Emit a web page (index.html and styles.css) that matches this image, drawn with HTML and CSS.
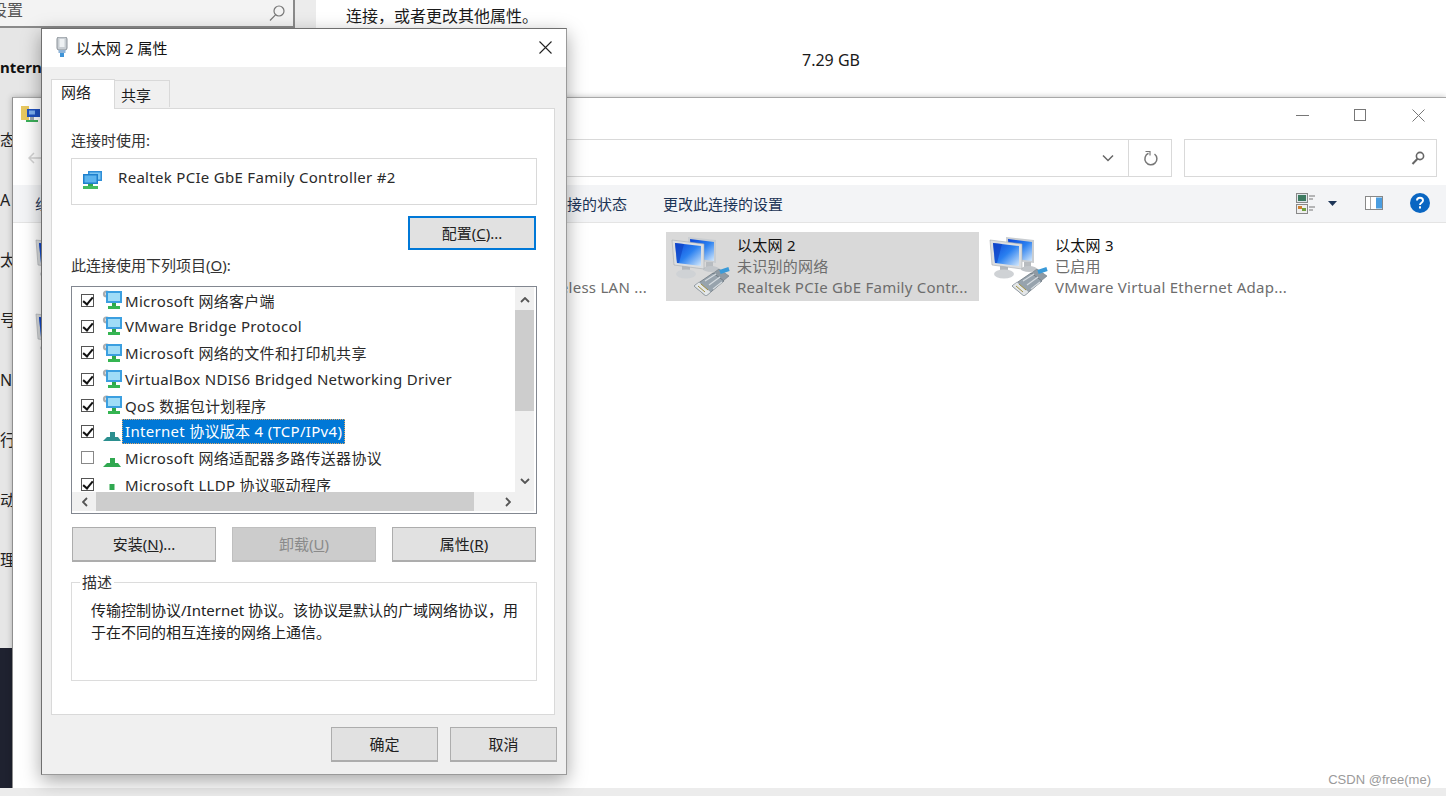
FILE: index.html
```html
<!DOCTYPE html>
<html lang="zh-CN">
<head>
<meta charset="utf-8">
<title>以太网 2 属性</title>
<link rel="stylesheet" href="styles.css">
</head>
<body>

<svg class="defs" width="0" height="0">
  <defs>
    <linearGradient id="blue" x1="0" y1="0" x2="1" y2="1">
      <stop offset="0" stop-color="#0a45d8"/>
      <stop offset=".5" stop-color="#2a80f0"/>
      <stop offset="1" stop-color="#d4e8fb"/>
    </linearGradient>
    <symbol id="bigpc" viewBox="0 0 60 60">
      <polygon points="18,1 46,4 46,27 19,24" fill="#c9cdd1"/>
      <polygon points="20,3 44,6 44,25 21,22" fill="url(#blue)"/>
      <rect x="36" y="26" width="7" height="6" fill="#b8bcc0"/>
      <ellipse cx="41" cy="33" rx="8" ry="3" fill="#c2c6ca"/>
      <rect x="12" y="29" width="8" height="7" fill="#b4b8bc"/>
      <ellipse cx="16" cy="38" rx="10" ry="4.500" fill="#cfd2d5"/>
      <polygon points="2,4 34,8 34,33 4,29" fill="#dcdee0" stroke="#a8acb0" stroke-width=".6"/>
      <polygon points="5,7 31,10 31,30 7,27" fill="url(#blue)"/>
      <polygon points="5,7 14,8 9,27 7,27" fill="#0f3fc0" opacity=".6"/>
      <polygon points="42,38 53,45 59,40 49,33" fill="#8f9aa3" stroke="#6f7a83" stroke-width=".6"/>
      <polygon points="24,50 43,37 54,45 36,60" fill="#97a3ad" stroke="#66717a" stroke-width=".7"/>
      <polygon points="24,50 36,60 41,56 29,46" fill="#e4e7e9" stroke="#7f8991" stroke-width=".5"/>
      <path d="M28 50l7 6M31 48l7 6" stroke="#a08f40" stroke-width="1" fill="none"/>
      <path d="M35 45l11-7M39 49l11-8M43 53l9-7" stroke="#d5dbe0" stroke-width="1.200" fill="none"/>
      <path d="M50 36l9-3" stroke="#3a9ad8" stroke-width="4" fill="none"/>
    </symbol>
    <symbol id="netpc" viewBox="0 0 20 20">
      <circle cx="4.500" cy="4" r="3.600" fill="#a9adb0"/>
      <circle cx="4.500" cy="4" r="1.400" fill="#e8e8e8"/>
      <rect x="4" y="1" width="16" height="12" fill="#3b9fe0"/>
      <rect x="6" y="3" width="12" height="8" fill="#9fdcf7"/>
      <rect x="10" y="13" width="4" height="3" fill="#2fa84a"/>
      <rect x="6" y="16" width="12" height="3" fill="#35b552"/>
    </symbol>
    <symbol id="stand" viewBox="0 0 20 20">
      <rect x="8" y="10" width="5" height="5" fill="currentColor"/>
      <polygon points="1,19 5,15 16,15 19,19" fill="currentColor"/>
    </symbol>
    <symbol id="standtop" viewBox="0 0 20 20">
      <rect x="7.500" y="10" width="5" height="6" fill="currentColor"/>
    </symbol>
    <symbol id="adapter" viewBox="0 0 20 18">
      <rect x="6" y="0" width="14" height="10" fill="#2f8fd8"/>
      <rect x="7.500" y="1.500" width="11" height="7" fill="#7cc6f2"/>
      <rect x="1" y="3" width="15" height="10" fill="#1f80cc"/>
      <rect x="2.500" y="4.500" width="12" height="7" fill="#5cb4ee"/>
      <rect x="6" y="13" width="5" height="2" fill="#30a850"/>
      <rect x="1" y="15" width="15" height="3" fill="#45bb60"/>
    </symbol>
  </defs>
</svg>

<!-- settings window behind everything -->
<div class="win settings">
  <div class="setnav">
    <div class="setsearch">
      <span class="setsearch-text">设置</span>
      <svg width="18" height="18" viewBox="0 0 18 18"><circle cx="11" cy="7" r="5" fill="none" stroke="#777" stroke-width="1.2"/><path d="M7.500 10.800L2 16.500" stroke="#777" stroke-width="1.2"/></svg>
    </div>
    <div class="setheading">ntern</div>
    <div class="setlist">
      <div>态</div>
      <div>A</div>
      <div>太</div>
      <div>号</div>
      <div>N</div>
      <div>行</div>
      <div>动</div>
      <div>理</div>
    </div>
    <div class="setfoot"></div>
  </div>
  <div class="setmain">
    <p>连接，或者更改其他属性。</p>
    <p class="setsize">7.29 GB</p>
  </div>
</div>

<!-- network connections -->
<div class="win explorer">
  <div class="extitle">
    <svg class="folderico" width="20" height="20" viewBox="0 0 20 20">
      <rect x="0" y="1" width="8" height="14" fill="#e8c860"/>
      <rect x="6" y="4" width="13" height="8" fill="#1f50c0"/>
      <rect x="8" y="5.500" width="6" height="4" fill="#7fb0f0"/>
      <rect x="5" y="15" width="12" height="2" fill="#3cb05a"/>
      <rect x="9" y="12" width="4" height="3" fill="#a0a8b0"/>
    </svg>
    <div class="winctl">
      <svg width="13" height="13" viewBox="0 0 13 13"><path d="M0 6.500H13" stroke="#777"/></svg>
      <svg width="13" height="13" viewBox="0 0 13 13"><rect x=".5" y=".5" width="11" height="11" fill="none" stroke="#777"/></svg>
      <svg width="13" height="13" viewBox="0 0 13 13"><path d="M.5 .5L12.500 12.500M12.500 .5L.5 12.500" stroke="#777"/></svg>
    </div>
  </div>
  <div class="exaddr">
    <svg class="backarrow" width="14" height="12" viewBox="0 0 14 12"><path d="M6 1L1 6l5 5M1 6H14" fill="none" stroke="#d4d4d4" stroke-width="1.500"/></svg>
    <div class="addrbox">
      <svg class="chev" width="12" height="8" viewBox="0 0 12 8"><path d="M1 1.500l5 5 5-5" fill="none" stroke="#666" stroke-width="1.500"/></svg>
      <div class="refresh">
        <svg width="15" height="15" viewBox="0 0 15 15"><path d="M5.500 2.300A6 6 0 1 0 11.500 3" fill="none" stroke="#777" stroke-width="1.500"/><path d="M2.500 .5h4.500v4" fill="none" stroke="#777" stroke-width="1.200"/></svg>
      </div>
    </div>
    <div class="exsearch">
      <svg width="14" height="14" viewBox="0 0 14 14"><circle cx="9" cy="5" r="3.600" fill="none" stroke="#666" stroke-width="1.600"/><path d="M6.500 7.800L1.500 13" stroke="#666" stroke-width="2"/></svg>
    </div>
  </div>
  <div class="excmd">
    <span class="cmd-org">组织</span>
    <span class="cmd-state">查看此连接的状态</span>
    <span class="cmd-change">更改此连接的设置</span>
    <div class="cmdtools">
      <svg width="19" height="21" viewBox="0 0 19 21">
        <rect x=".5" y=".5" width="11" height="9" fill="#dfe6ea" stroke="#888"/><rect x="2" y="2" width="8" height="6" fill="#3c7a60"/>
        <rect x=".5" y="11.500" width="11" height="9" fill="#eee" stroke="#888"/><rect x="2" y="13" width="4" height="3" fill="#d08030"/><rect x="6" y="15" width="4" height="3" fill="#70a040"/>
        <path d="M13 3H19M13 6H17M13 14H19M13 17H17" stroke="#777"/>
      </svg>
      <svg class="caret" width="9" height="5" viewBox="0 0 9 5"><path d="M0 0H9L4.500 5z" fill="#1d3557"/></svg>
      <svg class="pane" width="18" height="14" viewBox="0 0 18 14"><rect x=".5" y=".5" width="17" height="13" fill="#fff" stroke="#888"/><rect x="11" y="1.500" width="6" height="11" fill="#4a9de0"/><path d="M5.500 1V13" stroke="#aaa"/></svg>
      <svg class="help" width="20" height="20" viewBox="0 0 20 20"><circle cx="10" cy="10" r="10" fill="#0a66c2"/><path d="M7 7.500C7 5.800 8.300 4.800 10 4.800s3 1 3 2.600c0 2.300-3 2.300-3 4.500" fill="none" stroke="#fff" stroke-width="1.900"/><rect x="9" y="13.300" width="2" height="2.200" fill="#fff"/></svg>
    </div>
  </div>
  <div class="exitems">
    <div class="conn">
      <svg class="connico" width="60" height="60"><use href="#bigpc"/></svg>
    </div>
    <div class="conn conn-wifi">
      <svg class="connico" width="60" height="60"><use href="#bigpc"/></svg>
      <div class="conntext"><div>&nbsp;</div><div>&nbsp;</div><div class="sub">Wireless LAN ...</div></div>
    </div>
    <div class="conn selected">
      <svg class="connico" width="60" height="60"><use href="#bigpc"/></svg>
      <div class="conntext"><div>以太网 2</div><div class="sub">未识别的网络</div><div class="sub">Realtek PCIe GbE Family Contr...</div></div>
    </div>
    <div class="conn">
      <svg class="connico" width="60" height="60"><use href="#bigpc"/></svg>
      <div class="conntext"><div>以太网 3</div><div class="sub">已启用</div><div class="sub">VMware Virtual Ethernet Adap...</div></div>
    </div>
    <div class="conn">
      <svg class="connico" width="60" height="60"><use href="#bigpc"/></svg>
    </div>
  </div>
</div>

<div class="bottomstrip"></div>

<!-- properties dialog -->
<div class="win dialog">
  <div class="dlgtitle">
    <svg width="12" height="20" viewBox="0 0 12 20">
      <rect x="1" y="0" width="10" height="13" rx="2" fill="#c9ced3" stroke="#8b9299"/>
      <rect x="3.500" y="2" width="5" height="8" fill="#eef1f3"/>
      <rect x="2.500" y="13" width="7" height="3" fill="#8fb4d8"/>
      <rect x="4" y="16" width="4" height="4" fill="#3f94d8"/>
    </svg>
    <span class="dlgname">以太网 2 属性</span>
    <svg class="dlgclose" width="13" height="13" viewBox="0 0 13 13"><path d="M.5 .5L12.500 12.500M12.500 .5L.5 12.500" stroke="#222" stroke-width="1.100"/></svg>
  </div>

  <div class="tabs">
    <div class="tab active">网络</div>
    <div class="tab">共享</div>
  </div>

  <div class="page">
    <div class="lbl">连接时使用:</div>
    <div class="adapterbox">
      <svg width="20" height="18"><use href="#adapter"/></svg>
      <span>Realtek PCIe GbE Family Controller #2</span>
    </div>
    <div class="cfgrow"><button class="btn focused">配置(<u>C</u>)...</button></div>
    <div class="lbl lbl-list">此连接使用下列项目(<u>O</u>):</div>

    <div class="listbox">
      <div class="listrows">
        <div class="row"><span class="chk on"></span><svg width="20" height="20"><use href="#netpc"/></svg><span class="rowtext">Microsoft 网络客户端</span></div>
        <div class="row"><span class="chk on"></span><svg width="20" height="20"><use href="#netpc"/></svg><span class="rowtext">VMware Bridge Protocol</span></div>
        <div class="row"><span class="chk on"></span><svg width="20" height="20"><use href="#netpc"/></svg><span class="rowtext">Microsoft 网络的文件和打印机共享</span></div>
        <div class="row"><span class="chk on"></span><svg width="20" height="20"><use href="#netpc"/></svg><span class="rowtext">VirtualBox NDIS6 Bridged Networking Driver</span></div>
        <div class="row"><span class="chk on"></span><svg width="20" height="20"><use href="#netpc"/></svg><span class="rowtext">QoS 数据包计划程序</span></div>
        <div class="row"><span class="chk on"></span><svg class="teal" width="20" height="20"><use href="#stand"/></svg><span class="rowtext current">Internet 协议版本 4 (TCP/IPv4)</span></div>
        <div class="row"><span class="chk"></span><svg class="green" width="20" height="20"><use href="#stand"/></svg><span class="rowtext">Microsoft 网络适配器多路传送器协议</span></div>
        <div class="row"><span class="chk on"></span><svg class="green" width="20" height="20"><use href="#standtop"/></svg><span class="rowtext">Microsoft LLDP 协议驱动程序</span></div>
      </div>
      <div class="vscroll">
        <svg width="10" height="6" viewBox="0 0 10 6"><path d="M1 5l4-4 4 4" fill="none" stroke="#555" stroke-width="1.800"/></svg>
        <div class="vthumb"></div>
        <svg width="10" height="6" viewBox="0 0 10 6"><path d="M1 1l4 4 4-4" fill="none" stroke="#555" stroke-width="1.800"/></svg>
      </div>
      <div class="hscroll">
        <svg width="6" height="10" viewBox="0 0 6 10"><path d="M5 1L1 5l4 4" fill="none" stroke="#555" stroke-width="1.800"/></svg>
        <div class="hthumb"></div>
        <svg width="6" height="10" viewBox="0 0 6 10"><path d="M1 1l4 4-4 4" fill="none" stroke="#555" stroke-width="1.800"/></svg>
      </div>
    </div>

    <div class="btnrow">
      <button class="btn">安装(<u>N</u>)...</button>
      <button class="btn disabled">卸载(<u>U</u>)</button>
      <button class="btn">属性(<u>R</u>)</button>
    </div>

    <fieldset class="descr">
      <legend>描述</legend>
      <p>传输控制协议/Internet 协议。该协议是默认的广域网络协议，用于在不同的相互连接的网络上通信。</p>
    </fieldset>
  </div>

  <div class="dlgfoot">
    <button class="btn">确定</button>
    <button class="btn">取消</button>
  </div>
</div>

<div class="watermark">CSDN @free(me)</div>

</body>
</html>
```

FILE: styles.css
```css
*{box-sizing:border-box;}
html,body{margin:0;padding:0;height:100%;overflow:hidden;}
body{background:#fff;color:#1c1c1c;font-family:"Noto Sans","Noto Sans CJK SC",sans-serif;font-size:15px;position:relative;}
p{margin:0;}
.defs{position:absolute;}
.win{position:absolute;}

/* settings window */
.settings{left:0;top:0;width:100%;height:788px;display:flex;}
.setnav{width:316px;display:flex;flex-direction:column;background:#ececec;}
.setsearch{width:295px;height:28px;flex:none;background:#f3f3f3;border-right:2px solid #8a8a8a;border-bottom:2px solid #8a8a8a;display:flex;align-items:center;justify-content:space-between;padding-right:7px;overflow:hidden;font-size:16px;color:#555;}
.setsearch-text{margin-left:-9px;margin-top:-8px;}
.setheading{height:82px;flex:none;padding-top:28px;line-height:22px;font-size:15px;font-weight:700;color:#111;background:#e6e6e6;}
.setlist{flex:1;background:#e6e6e6;font-size:16px;color:#222;}
.setlist div{height:60px;line-height:60px;}
.setfoot{height:140px;flex:none;background:#1f2230;}
.setmain{flex:1;padding:5px 0 0 30px;font-size:16px;line-height:22px;color:#1a1a1a;}
.setsize{margin:22px 0 0 456px;}

/* explorer */
.explorer{left:12px;top:97px;right:0;height:691px;background:#fff;border-top:1px solid #a8a8a8;border-left:1px solid #8f8f8f;box-shadow:0 0 6px rgba(0,0,0,.25);}
.extitle{height:41px;display:flex;justify-content:space-between;padding:7px 21px 0 8px;}
.winctl{display:flex;gap:45px;padding-top:4px;}
.exaddr{height:38px;display:flex;align-items:center;padding-right:9px;}
.backarrow{margin:0 0 0 15px;flex:none;}
.addrbox{flex:1;height:38px;margin-left:18px;border:1px solid #d9d9d9;display:flex;align-items:center;justify-content:flex-end;}
.chev{margin-right:14px;}
.refresh{width:43px;height:36px;border-left:1px solid #d9d9d9;display:flex;align-items:center;justify-content:center;}
.exsearch{width:253px;height:38px;margin-left:12px;border:1px solid #d9d9d9;display:flex;align-items:center;justify-content:flex-end;padding-right:11px;}
.excmd{height:38px;margin-top:8px;background:#f3f4f6;border-bottom:1px solid #e4e4e4;display:flex;align-items:center;padding:0 16px 1px 22px;color:#1d3557;}
.cmd-state{margin-left:442px;}
.cmd-change{margin-left:36px;}
.cmdtools{margin-left:auto;display:flex;align-items:center;}
.caret{margin-left:13px;}
.pane{margin-left:28px;}
.help{margin-left:27px;}
.exitems{display:grid;grid-template-columns:repeat(4,313px);column-gap:5px;row-gap:5px;padding:9px 0 0 17px;}
.conn{height:69px;display:flex;padding:3px 0 0 5px;}
.conn-wifi .conntext{width:228px;text-align:right;}
.connico{flex:none;margin-top:1px;margin-left:-1px;}
.conn .connico + .conntext{margin-left:7px;}
.conntext{line-height:21px;color:#111;white-space:nowrap;letter-spacing:.25px;}
.conntext .sub{color:#6d6d6d;}
.selected{background:#d9d9d9;}
.bottomstrip{position:absolute;left:0;right:0;top:788px;height:8px;background:#ececec;}

/* dialog */
.dialog{left:41px;top:28px;width:526px;height:747px;background:#f0f0f0;border:1px solid #6f6f6f;border-right-color:#9a9a9a;border-bottom-color:#9a9a9a;box-shadow:0 6px 18px rgba(0,0,0,.35);}
.dlgtitle{height:38px;background:#fff;display:flex;align-items:center;padding:0 14px 2px 14px;}
.dlgname{margin-left:8px;color:#111;}
.dlgclose{margin-left:auto;}
.tabs{display:flex;align-items:flex-end;height:29px;margin:12px 0 0 9px;position:relative;z-index:1;}
.tab{width:55px;height:27px;line-height:28px;padding-left:6px;background:#f0f0f0;border:1px solid #d9d9d9;border-left:0;border-bottom:0;margin-bottom:1px;}
.tab.active{width:64px;height:30px;line-height:25px;padding-left:9px;background:#fff;border-left:1px solid #d9d9d9;border-bottom:0;margin-bottom:-1px;}
.page{width:504px;height:607px;margin-left:9px;background:#fff;border:1px solid #d9d9d9;padding:21px 17px 0 19px;}
.lbl{height:20px;line-height:20px;color:#333;}
.lbl-list{margin-top:5px;}
.adapterbox{height:47px;margin-top:8px;border:1px solid #d9d9d9;display:flex;align-items:center;gap:16px;padding:0 0 9px 10px;color:#2a2a2a;letter-spacing:.3px;}
.adapterbox svg{margin-top:5px;}
.cfgrow{margin-top:11px;display:flex;justify-content:flex-end;padding-right:1px;}
.btn{height:35px;width:144px;padding:0 0 2px;background:#e1e1e1;border:2px solid #adadad;border-width:1px 1px 2px 1px;font:inherit;color:#222;}
.btn u{text-underline-offset:1px;}
.btn.focused{width:128px;height:34px;border:2px solid #0078d7;}
.btn.disabled{background:#ccc;border-color:#bfbfbf;color:#8a8a8a;}
.listbox{height:228px;margin-top:11px;border:1px solid #828790;padding:0 2px 2px 0;display:grid;grid-template-columns:1fr 19px;grid-template-rows:205px 19px;}
.listrows{overflow:hidden;}
.row{height:26.3px;display:flex;align-items:center;padding-left:9px;white-space:nowrap;}
.chk{width:13px;height:13px;border:1px solid #555;background:#fff;margin-right:8px;flex:none;position:relative;}
.chk.on::after{content:"";position:absolute;left:3px;top:0;width:4px;height:8px;border:solid #111;border-width:0 2px 2px 0;transform:rotate(40deg);}
.chk:not(.on){border-color:#888;}
.row svg{flex:none;}
.teal{color:#2b8f8f;}
.green{color:#30a850;}
.rowtext{margin-left:3px;color:#2a2a2a;letter-spacing:.3px;}
.rowtext.current{margin-left:0;padding:0 3px;line-height:25px;background:#0078d7;color:#fff;outline:1px dotted #e0a868;outline-offset:-1px;}
.vscroll{background:#f0f0f0;display:flex;flex-direction:column;align-items:center;justify-content:space-between;padding-top:10px;padding-bottom:8px;position:relative;}
.vthumb{position:absolute;left:0;right:0;top:23px;height:101px;background:#cdcdcd;}
.hscroll{grid-column:1 / 3;background:#f0f0f0;display:flex;align-items:center;padding:0 23px 0 10px;}
.hthumb{width:378px;height:19px;background:#cdcdcd;margin:0 auto 0 8px;}
.btnrow{display:flex;gap:16px;margin-top:13px;padding-left:1px;}
.descr{margin:10px 0 0;padding:7px 15px 0 19px;height:109px;border:1px solid #dcdcdc;min-width:0;}
.descr legend{margin-left:-11px;padding:0 2px;line-height:20px;color:#333;}
.descr p{line-height:22px;color:#222;}
.dlgfoot{display:flex;justify-content:flex-end;gap:12px;margin-top:12px;padding-right:9px;}
.dlgfoot .btn{width:107px;}

.watermark{position:absolute;right:15px;top:772px;font-family:"Liberation Sans",sans-serif;font-size:13px;color:#9a9a9a;}
```
